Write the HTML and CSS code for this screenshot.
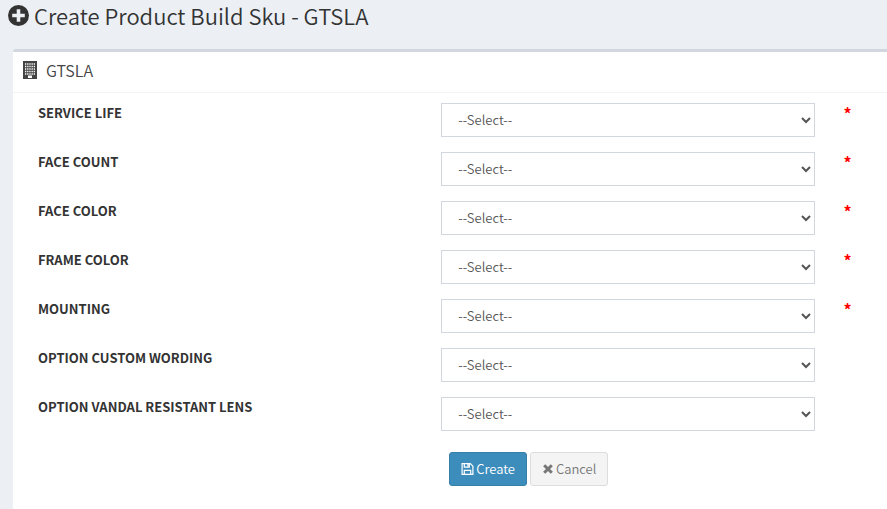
FILE: index.html
```html
<!DOCTYPE html>
<html lang="en">
<head>
<meta charset="UTF-8">
<meta name="viewport" content="width=device-width, initial-scale=1.0">
<title>Create Product Build Sku</title>
<link rel="stylesheet" href="styles.css">
</head>
<body>

<h1 class="page-title">
  <svg class="icon-plus" viewBox="0 0 20 20"><circle cx="10" cy="10" r="10" fill="currentColor"/><path d="M8.3 4h3.4v4.3H16v3.4h-4.3V16H8.3v-4.3H4V8.3h4.3z" fill="#ecf0f5"/></svg>
  Create Product Build Sku - GTSLA
</h1>

<div class="box">
  <div class="box-header">
    <svg class="icon-building" viewBox="0 0 14 18"><path d="M0 0h14v18H0z" fill="currentColor"/><path d="M2 3h10M2 5.5h10M2 8h10M2 10.5h10M2 13h10" stroke="#fff" stroke-width="1.3" stroke-dasharray="1.3 .87"/><path d="M5 14.5h4v2.5H5z" fill="#fff"/></svg>
    <h2 class="box-title">GTSLA</h2>
  </div>
  <form class="box-body">
    <div class="form-row">
      <label for="service-life">SERVICE LIFE</label>
      <select class="form-control" id="service-life" required><option value="">--Select--</option></select>
      <span class="required">*</span>
    </div>
    <div class="form-row">
      <label for="face-count">FACE COUNT</label>
      <select class="form-control" id="face-count" required><option value="">--Select--</option></select>
      <span class="required">*</span>
    </div>
    <div class="form-row">
      <label for="face-color">FACE COLOR</label>
      <select class="form-control" id="face-color" required><option value="">--Select--</option></select>
      <span class="required">*</span>
    </div>
    <div class="form-row">
      <label for="frame-color">FRAME COLOR</label>
      <select class="form-control" id="frame-color" required><option value="">--Select--</option></select>
      <span class="required">*</span>
    </div>
    <div class="form-row">
      <label for="mounting">MOUNTING</label>
      <select class="form-control" id="mounting" required><option value="">--Select--</option></select>
      <span class="required">*</span>
    </div>
    <div class="form-row">
      <label for="custom-wording">OPTION CUSTOM WORDING</label>
      <select class="form-control" id="custom-wording"><option value="">--Select--</option></select>
    </div>
    <div class="form-row">
      <label for="vandal-lens">OPTION VANDAL RESISTANT LENS</label>
      <select class="form-control" id="vandal-lens"><option value="">--Select--</option></select>
    </div>
    <div class="form-row">
      <div class="actions">
        <button class="btn btn-primary" type="submit">
          <svg class="icon-save" viewBox="0 0 12 12" fill="none" stroke="currentColor" stroke-width="1.2"><path d="M.6.6h8.2l2.6 2.6v8.2H.6z"/><path d="M2.8 11.5V7.3h6.4v4.2M2.8.5v3.7h5V.5"/><path d="M5.8 1h1.4v2.4H5.8z" fill="currentColor" stroke="none"/></svg>
          Create
        </button>
        <button class="btn btn-default" type="button">
          <svg class="icon-times" viewBox="0 0 10 10"><path d="M1.2 1.2l7.6 7.6M8.8 1.2l-7.6 7.6" stroke="currentColor" stroke-width="3"/></svg>
          Cancel
        </button>
      </div>
    </div>
  </form>
</div>

</body>
</html>
```
FILE: styles.css
```css
* {
  box-sizing: border-box;
}
body {
  margin: 0;
  background: #ecf0f5;
  color: #333;
  font-family: "Noto Sans CJK SC", "Open Sans", sans-serif;
  font-size: 13px;
  line-height: 20px;
}
svg {
  flex: none;
}
.page-title {
  display: flex;
  align-items: center;
  gap: 5px;
  margin: 0;
  padding: 0 8px;
  font-size: 22px;
  font-weight: 350;
  line-height: 30px;
}
.icon-plus {
  width: 21px;
  height: 21px;
}
.box {
  min-height: calc(100vh - 49px);
  margin: 19px 0 0 13px;
  background: #fff;
  border-top: 3px solid #d2d6de;
  border-top-left-radius: 3px;
}
.box-header {
  display: flex;
  align-items: center;
  gap: 9px;
  padding: 8px 10px 12px;
  border-bottom: 1px solid #f4f4f4;
  color: #444;
}
.icon-building {
  width: 14px;
  height: 18px;
}
.box-title {
  margin: 0;
  font-size: 16px;
  font-weight: 350;
  line-height: 20px;
}
.box-body {
  padding: 10px 0 20px 10px;
}
.form-row {
  display: grid;
  grid-template-columns: 7fr 7fr 1fr;
  margin-bottom: 15px;
}
.form-row label {
  padding: 0 15px;
  font-weight: 600;
}
.form-control {
  height: 34px;
  margin: 0 14px 0 15px;
  padding: 5px 1px 7px 12px;
  border: 1px solid #d2d6de;
  border-radius: 0;
  background: #fff;
  color: #555;
  font-family: inherit;
  font-size: 13px;
  font-weight: 350;
}
.required {
  padding-left: 14px;
  color: #f00;
  font-size: 16px;
  font-weight: 600;
}
.actions {
  display: flex;
  grid-column: 2;
  gap: 3px;
  padding: 6px 23px;
}
.btn {
  display: flex;
  align-items: center;
  gap: 2px;
  height: 34px;
  padding: 6px 11px;
  border: 1px solid #367fa9;
  border-radius: 3px;
  font-family: inherit;
  font-size: 13px;
  font-weight: 350;
  line-height: 20px;
  cursor: pointer;
}
.btn-primary {
  background: #3c8dbc;
  color: #fff;
}
.btn-default {
  background: #f4f4f4;
  border-color: #ddd;
  color: #777;
}
.icon-save {
  width: 13px;
  height: 12px;
}
.icon-times {
  width: 12px;
  height: 10px;
}
```
